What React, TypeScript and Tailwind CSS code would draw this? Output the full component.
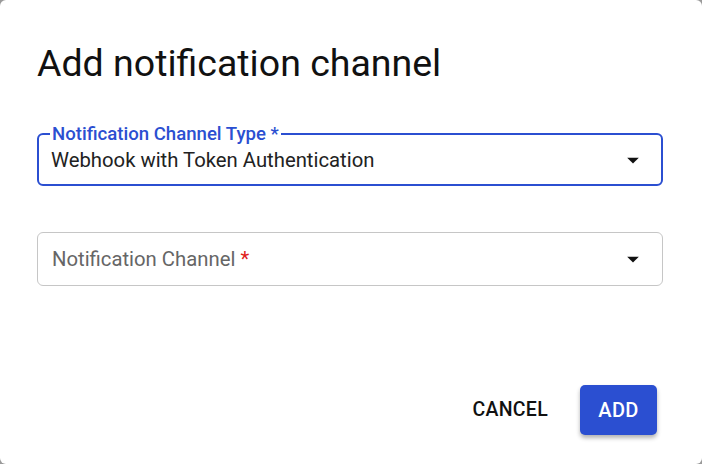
import { useState } from "react";

function DropArrow() {
  return (
    <svg width="28" height="28" viewBox="0 0 24 24" className="shrink-0">
      <path d="M7 10l5 5 5-5z" fill="#111" />
    </svg>
  );
}

export default function App() {
  const [channelType] = useState("Webhook with Token Authentication");

  return (
    <div className="w-[702px] h-[464px] bg-[#9a9a9a]" style={{ fontFamily: "Roboto, 'Liberation Sans', sans-serif" }}>
      <div className="w-full h-full bg-white rounded-[6px] flex flex-col pl-[37px] pr-[39px]">
        <h2 className="pt-[41px] text-[37.5px] leading-[44px] text-[#111] font-normal">
          Add notification channel
        </h2>

        {/* Channel type - focused field */}
        <fieldset className="mt-[39px] m-0 px-[12px] pb-[8px] border-[2.5px] border-[#2b4fd1] rounded-[6px] min-w-0">
          <legend className="px-[2px] -ml-[1px] text-[18.6px] leading-[20px] font-medium text-[#2b4fd1]">
            Notification Channel Type *
          </legend>
          <div className="flex items-center justify-between h-[32px] pr-[2px]">
            <span className="text-[20.3px] text-[#222]">{channelType}</span>
            <DropArrow />
          </div>
        </fieldset>

        {/* Channel - empty field */}
        <div className="mt-[46px] h-[54px] border border-[#c6c6c6] rounded-[6px] flex items-center justify-between pl-[14px] pr-[15px]">
          <span className="text-[20.3px] text-[#666]">
            Notification Channel <span className="text-[#e0201b]">*</span>
          </span>
          <DropArrow />
        </div>

        <div className="mt-auto mb-[29px] flex justify-end items-center gap-[16px] pr-[6px]">
          <button className="h-[50px] px-[16px] text-[19.5px] font-medium tracking-[0.3px] text-[#111]">
            CANCEL
          </button>
          <button className="h-[50px] w-[77px] rounded-[5px] bg-[#2b4fd1] text-white text-[20px] font-medium tracking-[0.3px] shadow-[0_3px_4px_rgba(0,0,0,0.3)]">
            ADD
          </button>
        </div>
      </div>
    </div>
  );
}
